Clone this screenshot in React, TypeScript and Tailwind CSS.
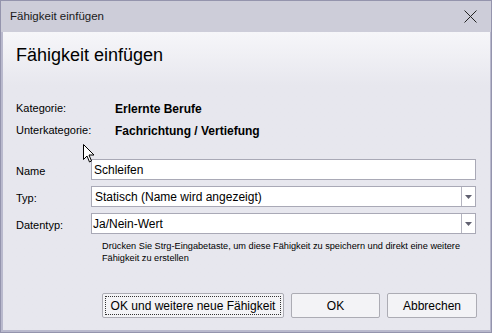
import React from 'react'

const font = { fontFamily: '"Liberation Sans", Arial, sans-serif' }

// Kleine Dropdown-Taste am rechten Rand der Auswahlfelder
function ComboArrow() {
  return (
    <div className="w-[14px] h-full border-l border-[#b4b4c0] flex items-center justify-center">
      <svg width="7" height="4" viewBox="0 0 7 4"><path d="M0 0h7L3.5 4z" fill="#606070" /></svg>
    </div>
  )
}

function Row({ label, children }: { label: string; children: React.ReactNode }) {
  return (
    <div className="flex items-center h-[21px]">
      <span className="w-[75px] text-[11px] text-black pt-[4px]">{label}</span>
      {children}
    </div>
  )
}

export default function App() {
  return (
    <div style={font} className="w-[492px] h-[333px] bg-[#b9b9cd] border border-[#9494ad] flex flex-col relative overflow-hidden">
      {/* Titelleiste */}
      <div className="h-[31px] bg-[#cdcdd9] flex items-center justify-between pl-[9px] pr-[14px] shrink-0">
        <span className="text-[11.5px] text-[#1a1a1a]">Fähigkeit einfügen</span>
        <svg width="13" height="13" viewBox="0 0 13 13" stroke="#222" strokeWidth="1"><path d="M0.5 0.5l12 12M12.5 0.5l-12 12" /></svg>
      </div>

      {/* Inhalt */}
      <div className="flex-1 ml-[2px] mr-[1px] mb-[2px] bg-gradient-to-b from-[#f6f6f9] from-0% to-[#e7e7ee] to-[18%] flex flex-col pl-[13px]">
        <h1 className="text-[18px] text-black mt-[11px] leading-[24px]">Fähigkeit einfügen</h1>

        <div className="mt-[35px] flex flex-col gap-[9px] text-[11px] text-black">
          <div className="flex items-center h-[13px]">
            <span className="w-[99px]">Kategorie:</span>
            <span className="font-bold text-[12px]">Erlernte Berufe</span>
          </div>
          <div className="flex items-center h-[13px]">
            <span className="w-[99px]">Unterkategorie:</span>
            <span className="font-bold text-[12px]">Fachrichtung / Vertiefung</span>
          </div>
        </div>

        <div className="mt-[22px] flex flex-col gap-[6px] w-[460px]">
          <Row label="Name">
            <div className="flex-1 h-full bg-white border border-[#a9a9b6] flex items-center px-[2px] text-[12px]">Schleifen</div>
          </Row>
          <Row label="Typ:">
            <div className="flex-1 h-full bg-white border border-[#a9a9b6] flex items-center text-[12px]">
              <span className="flex-1 px-[3px]">Statisch (Name wird angezeigt)</span>
              <ComboArrow />
            </div>
          </Row>
          <Row label="Datentyp:">
            <div className="flex-1 h-full bg-white border border-[#a9a9b6] flex items-center text-[12px]">
              <span className="flex-1 px-[1px]">Ja/Nein-Wert</span>
              <ComboArrow />
            </div>
          </Row>
        </div>

        <p className="ml-[86px] mt-[6px] text-[9.2px] leading-[12px] text-black w-[372px]">
          Drücken Sie Strg-Eingabetaste, um diese Fähigkeit zu speichern und direkt eine weitere Fähigkeit zu erstellen
        </p>

        {/* Schaltflächen */}
        <div className="mt-auto mb-[12px] ml-[86px] flex gap-[7px] text-[12px] text-black">
          <button className="w-[182px] h-[25px] rounded-[2px] border border-[#acacb4] bg-[#f3f3f6] p-[2px]">
            <div className="w-full h-full border border-dotted border-[#333] flex items-center justify-center">OK und weitere neue Fähigkeit</div>
          </button>
          <button className="w-[89px] h-[25px] rounded-[2px] border border-[#acacb4] bg-[#f3f3f6]">OK</button>
          <button className="w-[90px] h-[25px] rounded-[2px] border border-[#acacb4] bg-[#f3f3f6]">Abbrechen</button>
        </div>
      </div>

      {/* Mauszeiger */}
      <svg className="absolute left-[82px] top-[143px]" width="12" height="19" viewBox="0 0 12 19">
        <path d="M0.5 0.5v15l3.5-3.5 2.5 6 2-1-2.5-6h5z" fill="white" stroke="black" strokeWidth="1" />
      </svg>
    </div>
  )
}
